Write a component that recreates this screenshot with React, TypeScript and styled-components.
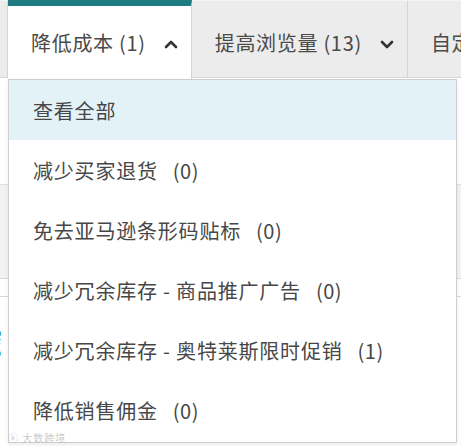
import React from "react";
import styled, { createGlobalStyle } from "styled-components";

const Global = createGlobalStyle`
  html, body { margin: 0; padding: 0; background: #fff; }
  body { font-family: "Noto Sans CJK SC", "Noto Sans", sans-serif; }
`;

const Page = styled.div`
  position: relative;
  width: 461px;
  height: 446px;
  overflow: hidden;
  background: #fff;
`;

const TabBar = styled.div`
  display: flex;
  height: 78px;
  background: #ececec;
  border-bottom: 1px solid #d6d6d6;
  border-top: 1px solid #f4f4f4;
  box-sizing: border-box;
`;

const Stub = styled.div`
  width: 7px;
  flex: none;
  border-right: 1px solid #d4d4d4;
`;

const Tab = styled.div<{ $active?: boolean }>`
  flex: none;
  display: flex;
  align-items: center;
  gap: 18px;
  padding: 0 13px 0 23px;
  box-sizing: border-box;
  height: ${(p) => (p.$active ? "79px" : "77px")};
  margin-top: ${(p) => (p.$active ? "-1px" : "0")};
  background: ${(p) => (p.$active ? "#fff" : "transparent")};
  border-top: ${(p) => (p.$active ? "6px solid #1e7b82" : "0")};
  border-right: 1px solid #d4d4d4;
  padding-top: ${(p) => (p.$active ? "0" : "6px")};
  font-size: 20px;
  letter-spacing: 0.7px;
  color: #4a4a4a;
  white-space: nowrap;
`;

const Chevron = ({ up }: { up?: boolean }) => (
  <svg width="14" height="10" viewBox="0 0 14 10" style={{ marginTop: 2 }}>
    <path
      d={up ? "M2 8 L7 3 L12 8" : "M2 3 L7 8 L12 3"}
      fill="none"
      stroke="#333"
      strokeWidth="2.6"
      strokeLinecap="round"
      strokeLinejoin="round"
    />
  </svg>
);

const Content = styled.div`
  display: flex;
  flex-direction: column;
`;

const Blank = styled.div<{ $h: number }>`
  height: ${(p) => p.$h}px;
`;

const HeadRow = styled.div`
  height: 95px;
  background: #f2f2f2;
  border-top: 1px solid #e0e0e0;
  border-bottom: 1px solid #d8d8d8;
  box-sizing: border-box;
`;

const Line = styled.div`
  height: 17px;
  border-bottom: 1px solid #d8d8d8;
`;

const LinkText = styled.div`
  margin-top: 28px;
  margin-left: -10px;
  font-family: "Noto Sans", sans-serif;
  font-size: 21px;
  line-height: 17px;
  color: #1d8a99;
`;

const Menu = styled.div`
  position: absolute;
  top: 79px;
  left: 8px;
  width: 449px;
  height: 364px;
  box-sizing: border-box;
  background: #fff;
  border: 1px solid #cfcfcf;
  box-shadow: 0 2px 4px rgba(0, 0, 0, 0.08);
  display: flex;
  flex-direction: column;
`;

const Item = styled.div<{ $hl?: boolean }>`
  height: 60px;
  flex: none;
  display: flex;
  align-items: center;
  gap: 15px;
  padding-left: 24px;
  background: ${(p) => (p.$hl ? "#e3f2f7" : "transparent")};
  font-size: 20px;
  letter-spacing: 0.8px;
  color: #474747;
  white-space: nowrap;
`;

const Count = styled.span`
  letter-spacing: 0.5px;
`;

const Watermark = styled.div`
  position: absolute;
  left: 8px;
  top: 430px;
  font-size: 10px;
  color: rgba(190, 190, 190, 0.8);
  letter-spacing: 1px;
`;

const items: { label: string; count?: number }[] = [
  { label: "查看全部" },
  { label: "减少买家退货", count: 0 },
  { label: "免去亚马逊条形码贴标", count: 0 },
  { label: "减少冗余库存 - 商品推广广告", count: 0 },
  { label: "减少冗余库存 - 奥特莱斯限时促销", count: 1 },
  { label: "降低销售佣金", count: 0 },
];

export default function App() {
  return (
    <Page>
      <Global />
      <TabBar>
        <Stub />
        <Tab $active>
          <span>降低成本 (1)</span>
          <Chevron up />
        </Tab>
        <Tab>
          <span>提高浏览量 (13)</span>
          <Chevron />
        </Tab>
        <Tab>
          <span>自定义</span>
        </Tab>
      </TabBar>
      <Content>
        <Blank $h={106} />
        <HeadRow />
        <Line />
        <LinkText>
          e<br />S
        </LinkText>
      </Content>
      <Menu>
        {items.map((it, i) => (
          <Item key={i} $hl={i === 0}>
            <span>{it.label}</span>
            {it.count !== undefined && <Count>({it.count})</Count>}
          </Item>
        ))}
      </Menu>
      <Watermark>ⓚ 大数跨境</Watermark>
    </Page>
  );
}
